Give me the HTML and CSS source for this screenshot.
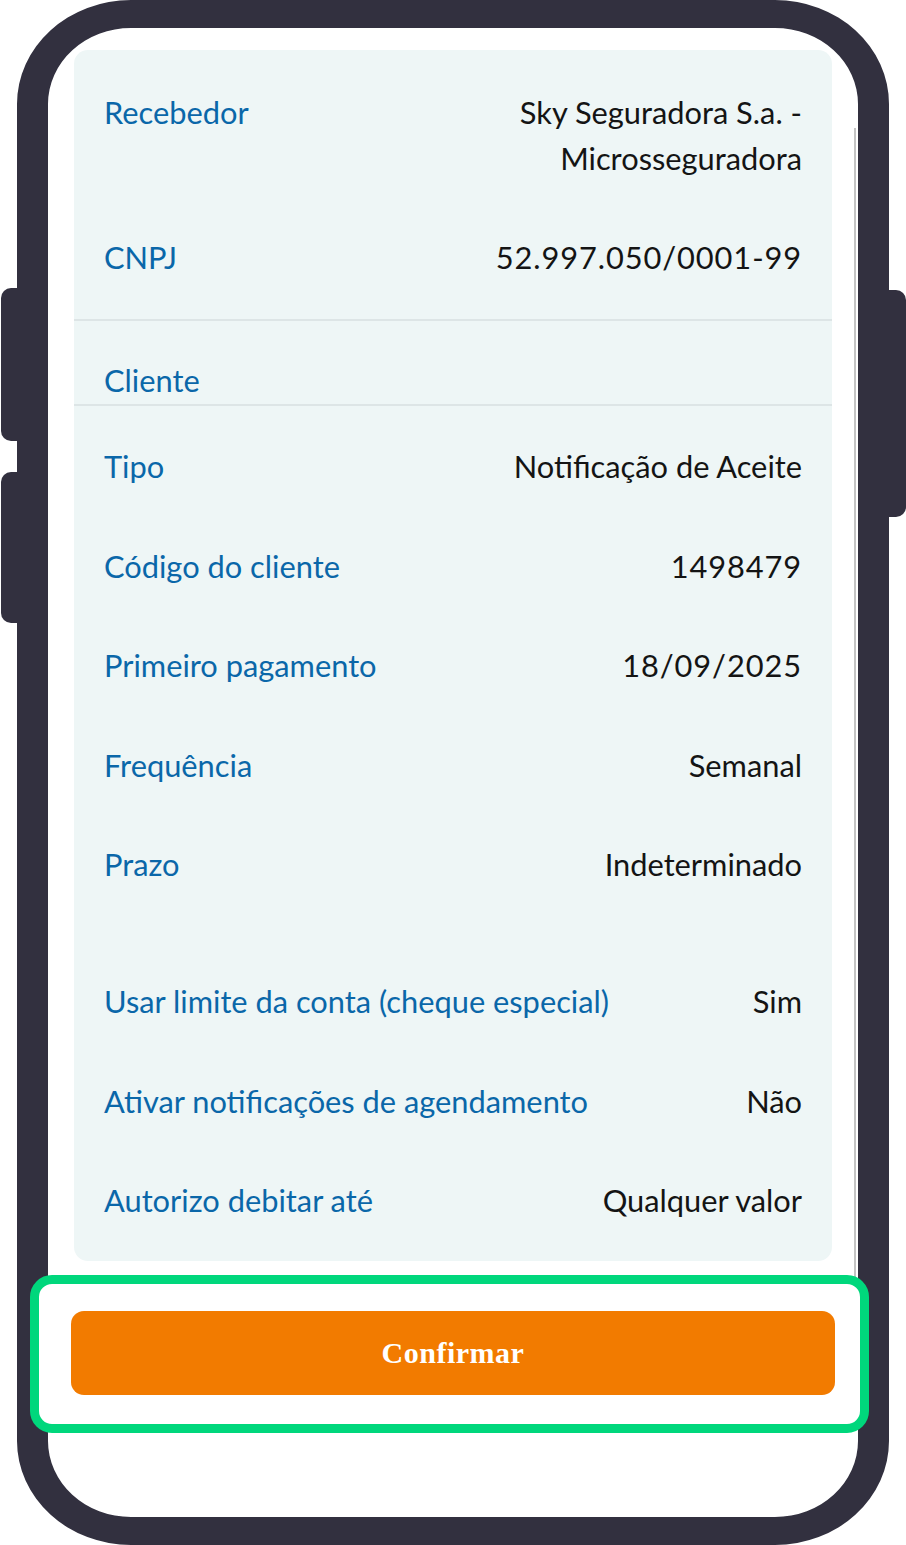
FILE: index.html
```html
<!DOCTYPE html>
<html lang="pt-BR">
<head>
<meta charset="utf-8">
<title>Confirmar</title>
<link rel="stylesheet" href="styles.css">
</head>
<body>
<div class="stage">
  <div class="side-btn side-left side-l1"></div>
  <div class="side-btn side-left side-l2"></div>
  <div class="side-btn side-right side-r1"></div>
  <div class="device">
    <div class="scroll-shadow"></div>
    <div class="card">
      <div class="section sec-top">
        <div class="row">
          <div class="label">Recebedor</div>
          <div class="value">Sky Seguradora S.a. -<br>Microsseguradora</div>
        </div>
        <div class="row">
          <div class="label">CNPJ</div>
          <div class="value num">52.997.050/0001-99</div>
        </div>
      </div>
      <div class="section sec-head">
        <div class="label">Cliente</div>
      </div>
      <div class="section sec-main">
        <div class="row"><div class="label">Tipo</div><div class="value">Notificação de Aceite</div></div>
        <div class="row"><div class="label">Código do cliente</div><div class="value num">1498479</div></div>
        <div class="row"><div class="label">Primeiro pagamento</div><div class="value num">18/09/2025</div></div>
        <div class="row"><div class="label">Frequência</div><div class="value">Semanal</div></div>
        <div class="row"><div class="label">Prazo</div><div class="value">Indeterminado</div></div>
      </div>
      <div class="section sec-opts">
        <div class="row"><div class="label">Usar limite da conta (cheque especial)</div><div class="value">Sim</div></div>
        <div class="row"><div class="label">Ativar notificações de agendamento</div><div class="value">Não</div></div>
        <div class="row"><div class="label">Autorizo debitar até</div><div class="value">Qualquer valor</div></div>
      </div>
    </div>
    <div class="actions">
      <button class="btn-confirm" type="button">Confirmar</button>
    </div>
    <div class="highlight"></div>
  </div>
</div>
</body>
</html>
```

FILE: styles.css
```css
* { box-sizing: border-box; }
html, body { margin: 0; padding: 0; background: #ffffff; }
body { width: 906px; height: 1545px; overflow: hidden; }

.stage {
  position: relative;
  width: 906px;
  height: 1545px;
  padding: 0 17px;
}

.side-btn {
  position: absolute;
  background: #32303f;
  width: 20px;
}
.side-left { left: 1px; border-radius: 10px 0 0 10px; }
.side-right { right: 0; border-radius: 0 10px 10px 0; }
.side-l1 { top: 288px; height: 153px; }
.side-l2 { top: 472px; height: 151px; }
.side-r1 { top: 290px; height: 227px; }

.device {
  position: relative;
  width: 872px;
  height: 1545px;
  background: #ffffff;
  border-style: solid;
  border-color: #32303f;
  border-width: 28px 31px;
  border-radius: 114px / 104px;
  font-family: "Lato", "Noto Sans", sans-serif;
  font-size: 30.8px;
}

.scroll-shadow {
  position: absolute;
  left: 806px;
  top: 100px;
  width: 2px;
  height: 1150px;
  background: #c4c4c4;
}

.card {
  margin: 22px 26px 0;
  background: #eef6f6;
  border-radius: 14px;
  padding: 39.5px 0 36.5px;
}

.section { padding: 0 30px; display: flex; flex-direction: column; }
.sec-top { gap: 53.5px; padding-bottom: 37.5px; border-bottom: 2px solid #dde5e6; }
.sec-head { padding-top: 37.5px; border-bottom: 2px solid #dde5e6; }
.sec-main { gap: 53.5px; padding-top: 38px; }
.sec-opts { gap: 53.5px; padding-top: 91px; }

.row {
  display: flex;
  justify-content: space-between;
  align-items: flex-start;
  gap: 20px;
}

.label, .value { line-height: 46px; white-space: nowrap; }
.label { color: #0a67a9; }
.value { color: #141414; text-align: right; }
.num { letter-spacing: 0.9px; }

.actions { position: relative; z-index: 2; padding: 50.5px 23px 0; }
.btn-confirm {
  display: block;
  width: 100%;
  height: 84px;
  border: 0;
  border-radius: 13px;
  background: #f27b00;
  color: #ffffff;
  font-family: "Liberation Serif", "Times New Roman", serif;
  font-weight: bold;
  font-size: 30px;
  letter-spacing: 0.5px;
  padding: 0;
}

.highlight {
  position: absolute;
  z-index: 1;
  left: -18px;
  top: 1247px;
  width: 839px;
  height: 158px;
  background: #ffffff;
  border: 9px solid #00d77c;
  border-radius: 22px;
  pointer-events: none;
}
```
